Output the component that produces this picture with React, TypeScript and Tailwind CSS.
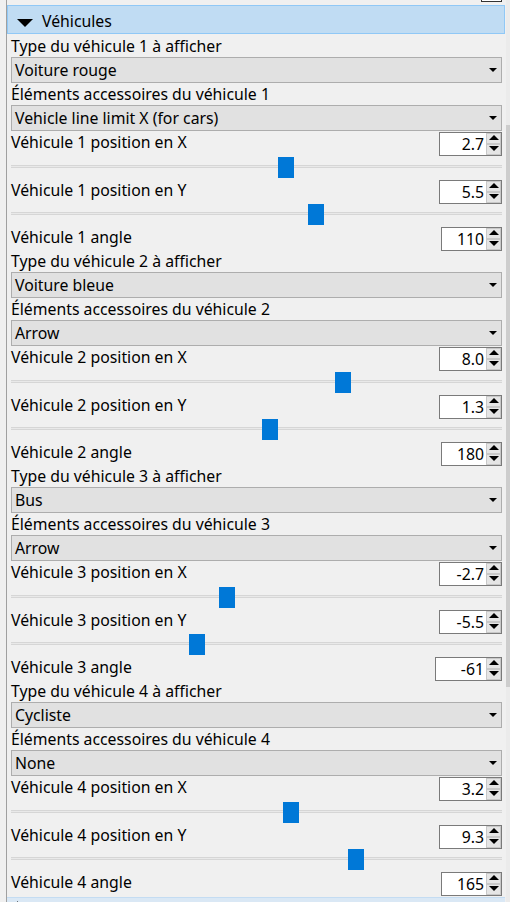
import React from "react";

interface Vehicle {
  n: number;
  type: string;
  acc: string;
  x: number;
  y: number;
  angle: number;
}

const vehicles: Vehicle[] = [
  { n: 1, type: "Voiture rouge", acc: "Vehicle line limit X (for cars)", x: 2.7, y: 5.5, angle: 110 },
  { n: 2, type: "Voiture bleue", acc: "Arrow", x: 8.0, y: 1.3, angle: 180 },
  { n: 3, type: "Bus", acc: "Arrow", x: -2.7, y: -5.5, angle: -61 },
  { n: 4, type: "Cycliste", acc: "None", x: 3.2, y: 9.3, angle: 165 },
];

// spin box width depends on its text, as in the reference
const spinWidth = (text: string) => {
  if (text === "-61") return "w-[67px]";
  if (text.includes(".")) return "w-[63px]";
  return "w-[61px]";
};

const Caret = () => (
  <svg width="8" height="4" viewBox="0 0 8 4">
    <path d="M0 0H8L4 4Z" fill="#000" />
  </svg>
);

const Select = ({ value }: { value: string }) => (
  <div className="flex items-center justify-between h-[26px] border border-[#adadad] bg-[#e1e1e1] pl-[3px] pr-[4px]">
    <span className="leading-[22px]">{value}</span>
    <Caret />
  </div>
);

const SpinButton = ({ up }: { up?: boolean }) => (
  <div className="h-[11px] flex justify-center pt-[1px] bg-[#e5e5e5] border border-[#c8c8c8]">
    <svg width="10" height="5" viewBox="0 0 10 5">
      <path d={up ? "M0 5H10L5 0Z" : "M0 0H10L5 5Z"} fill="#000" />
    </svg>
  </div>
);

const SpinBox = ({ text }: { text: string }) => (
  <div className={`flex h-[24px] border border-[#7a7a7a] bg-white ${spinWidth(text)}`}>
    <div className="flex-1 text-right pr-[2px] pt-[1px] leading-[21px]">{text}</div>
    <div className="flex flex-col w-[15px]">
      <SpinButton up />
      <SpinButton />
    </div>
  </div>
);

const SpinRow = ({ label, text }: { label: string; text: string }) => (
  <div className="flex items-start justify-between h-[25px]">
    <div className="mt-[1px] leading-[21px]">{label}</div>
    <div className="mt-[1px]">
      <SpinBox text={text} />
    </div>
  </div>
);

const Slider = ({ value, first }: { value: number; first?: boolean }) => (
  <div className={first ? "h-[23px] pt-[1px]" : "h-[22px]"}>
    <div className="relative h-[21px] pt-[8px]">
      <div className="h-[3px] border-y border-[#d6d6d6] bg-[#e9e9e9]" />
      <div
        className="absolute top-0 w-[16px] h-[21px] bg-[#0078d7]"
        style={{ left: 237.5 + value * 10.75 }}
      />
    </div>
  </div>
);

const VehicleBlock = ({ v }: { v: Vehicle }) => (
  <div>
    <div className="h-[21px] leading-[21px]">Type du véhicule {v.n} à afficher</div>
    <Select value={v.type} />
    <div className="h-[22px] leading-[22px]">Éléments accessoires du véhicule {v.n}</div>
    <Select value={v.acc} />
    <SpinRow label={`Véhicule ${v.n} position en X`} text={v.x.toFixed(1)} />
    <Slider value={v.x} first />
    <SpinRow label={`Véhicule ${v.n} position en Y`} text={v.y.toFixed(1)} />
    <Slider value={v.y} />
    <SpinRow label={`Véhicule ${v.n} angle`} text={String(v.angle)} />
  </div>
);

export default function App() {
  return (
    <div className="w-[510px] h-[902px] overflow-hidden bg-[#f0f0f0] flex font-['Noto_Sans',sans-serif] text-[15.8px] text-black">
      <div className="w-[6px] shrink-0" />
      <div className="w-[499px] shrink-0 border-l border-[#a0a0a0] flex flex-col">
        <div className="h-[5px] shrink-0 flex justify-end pr-[3px]">
          <div className="w-[21px] h-[2px] border-x border-b border-[#333] bg-white" />
        </div>

        <div className="h-[29px] shrink-0 flex items-start border border-[#90c8f6] bg-[#c0dcf3]">
          <svg className="ml-[9px] mt-[13px]" width="16" height="8" viewBox="0 0 16 8">
            <path d="M0 0H16L8 8Z" fill="#000" />
          </svg>
          <span className="ml-[9px] mt-[3.5px] leading-[22px]">Véhicules</span>
        </div>

        <div className="mt-[2px] pl-[4px] pr-[3px] shrink-0">
          {vehicles.map((v) => (
            <VehicleBlock key={v.n} v={v} />
          ))}
        </div>

        <div className="mt-[1px] h-[29px] shrink-0 flex items-start border-t border-[#c4dcf2] bg-[#dae8f5]">
          <svg className="ml-[10px] mt-[3px]" width="8" height="16" viewBox="0 0 8 16">
            <path d="M0 0V16L8 8Z" fill="#000" />
          </svg>
        </div>
      </div>
      <div className="w-[1px] shrink-0" />
      <div className="w-[4px] shrink-0 flex flex-col bg-[#ebebeb]">
        <div className="h-[125px] shrink-0" />
        <div className="h-[562px] shrink-0 bg-[#cdcdcd]" />
      </div>
    </div>
  );
}
